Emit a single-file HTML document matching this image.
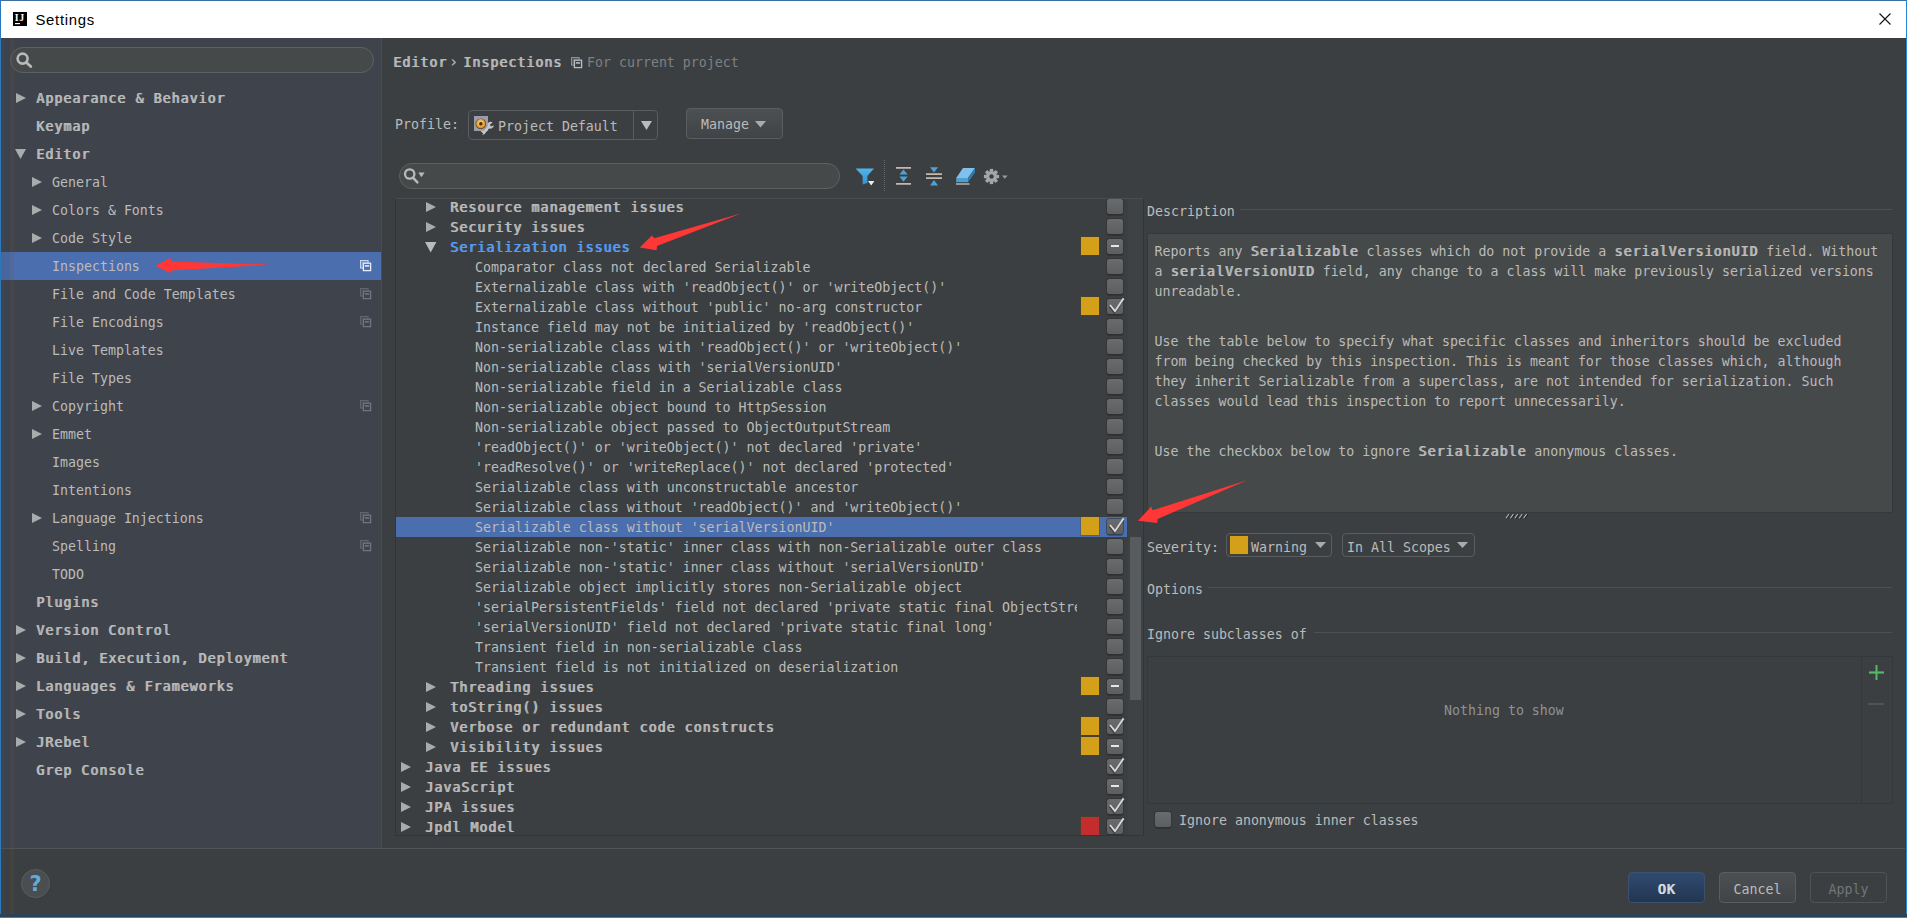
<!DOCTYPE html><html><head><meta charset="utf-8"><title>Settings</title><style>
*{box-sizing:border-box;margin:0;padding:0}
html,body{width:1907px;height:918px;overflow:hidden;background:#3c3f41}
body{position:relative;font-family:"DejaVu Sans Mono","Liberation Mono",monospace;font-size:13.28px;color:#bbbbbb;-webkit-font-smoothing:antialiased}
.abs{position:absolute}
.t{position:absolute;white-space:pre;line-height:20px;height:21px;padding-top:1px}
.b{font-weight:normal;letter-spacing:1.025px;text-shadow:1px 0 0 currentColor}
#titlebar{position:absolute;left:0;top:0;width:1907px;height:38px;background:#ffffff;border-top:1px solid #3b6f9f}
#title{position:absolute;left:35.4px;top:10px;font-family:"Liberation Sans",sans-serif;font-size:14.9px;color:#000;line-height:20px;letter-spacing:0.72px}
#bl{position:absolute;left:0;top:0;width:1px;height:918px;background:#2a78bd}
#br{position:absolute;left:1906px;top:0;width:1px;height:918px;background:#2b86d6}
#bb{position:absolute;left:0;top:914px;width:1907px;height:4px;background:linear-gradient(#33424e 0,#2a435a 33%,#23425f 74%,#4d7da9 76%)}
#side{position:absolute;left:1px;top:38px;width:380px;height:810px;background:#3e434c}
#sidediv{position:absolute;left:381px;top:38px;width:1px;height:810px;background:#4a4d50}
.lrow{position:absolute;left:1px;width:380px;height:28px;line-height:28px;white-space:pre}
.lrow.sel{background:#4b6eaf}
.lrow span{position:absolute;top:1px}
.search{position:absolute;border:1px solid #5e6162;background:#45494a;border-radius:14px}
.rrow{position:absolute;left:396px;width:731px;height:20px;line-height:20px;white-space:pre}
.rrow.sel{background:#4b6eaf}
.rrow span{position:absolute;top:1px}
.cb{position:absolute;width:16px;height:15px;border-radius:2.5px;background:linear-gradient(#6a6b6c,#5c5e60);box-shadow:0 0 0 1px rgba(43,45,47,.55),0 2px 0 rgba(30,32,34,.35)}
.sq{position:absolute;width:18px;height:18px;box-shadow:0 0 0 1px rgba(90,70,15,.3)}
.combo{position:absolute;border:1px solid #5a5d5f;border-radius:4px;background:#3c3f41}
.btn{position:absolute;border-radius:4px;border:1px solid #5a5d5f;background:linear-gradient(#4c5052,#404446);text-align:center;padding-top:2px}
.hl{position:absolute;height:1px;background:#4d5052}
svg{position:absolute;overflow:visible}
</style></head><body>
<div id="titlebar"></div>
<svg style="left:13px;top:12px" width="14" height="14" viewBox="0 0 14 14"><rect width="14" height="14" fill="#000"/><rect x="2" y="11" width="5" height="1.2" fill="#fff"/><text y="8.8" font-family="Liberation Serif,DejaVu Serif,serif" font-weight="bold" font-size="9.8" fill="#fff"><tspan x="1.7">I</tspan><tspan x="6.2">J</tspan></text></svg>
<div id="title">Settings</div>
<svg style="left:1879px;top:13px" width="12" height="12" viewBox="0 0 12 12"><path d="M0.5 0.5L11.5 11.5M11.5 0.5L0.5 11.5" stroke="#111" stroke-width="1.1" fill="none"/></svg>
<div id="side"></div><div id="sidediv"></div>
<div class="search" style="left:10px;top:47px;width:364px;height:26px"></div>
<svg style="left:16px;top:52px" width="16" height="16" viewBox="0 0 16 16"><circle cx="6.6" cy="6.6" r="5" fill="none" stroke="#b9b9b9" stroke-width="2.6"/><path d="M10.4 10.4L14.8 14.6" stroke="#b9b9b9" stroke-width="2.8" stroke-linecap="round"/></svg>
<div class="lrow" style="top:84px"><span class="b" style="left:35px">Appearance &amp; Behavior</span></div>
<svg style="left:16px;top:93px" width="10" height="10" viewBox="0 0 10 10" preserveAspectRatio="none"><path d="M0 0L10 5L0 10Z" fill="#a9abad"/></svg>
<div class="lrow" style="top:112px"><span class="b" style="left:35px">Keymap</span></div>
<div class="lrow" style="top:140px"><span class="b" style="left:35px">Editor</span></div>
<svg style="left:15px;top:149px" width="11" height="10" viewBox="0 0 11 10" preserveAspectRatio="none"><path d="M0 0L11 0L5.5 10Z" fill="#a9abad"/></svg>
<div class="lrow" style="top:168px"><span class="" style="left:51px">General</span></div>
<svg style="left:32px;top:177px" width="10" height="10" viewBox="0 0 10 10" preserveAspectRatio="none"><path d="M0 0L10 5L0 10Z" fill="#a9abad"/></svg>
<div class="lrow" style="top:196px"><span class="" style="left:51px">Colors &amp; Fonts</span></div>
<svg style="left:32px;top:205px" width="10" height="10" viewBox="0 0 10 10" preserveAspectRatio="none"><path d="M0 0L10 5L0 10Z" fill="#a9abad"/></svg>
<div class="lrow" style="top:224px"><span class="" style="left:51px">Code Style</span></div>
<svg style="left:32px;top:233px" width="10" height="10" viewBox="0 0 10 10" preserveAspectRatio="none"><path d="M0 0L10 5L0 10Z" fill="#a9abad"/></svg>
<div class="lrow sel" style="top:252px"><span class="" style="left:51px">Inspections</span></div>
<svg style="left:360px;top:260.4px" width="11" height="11" viewBox="0 0 11 11"><rect x="0.5" y="0.5" width="7.6" height="7.6" fill="#c8d4ec" fill-opacity=".35" stroke="#c8d4ec" stroke-width="1"/><rect x="3.4" y="3.2" width="7.2" height="7.4" fill="#4b6eaf" stroke="#e6ecf8" stroke-width="1.3"/><path d="M4.8 5.9H9.2" stroke="#e6ecf8" stroke-width="1.6"/></svg>
<div class="lrow" style="top:280px"><span class="" style="left:51px">File and Code Templates</span></div>
<svg style="left:360px;top:288.4px" width="11" height="11" viewBox="0 0 11 11"><rect x="0.5" y="0.5" width="7.6" height="7.6" fill="#5f656d" fill-opacity=".35" stroke="#5f656d" stroke-width="1"/><rect x="3.4" y="3.2" width="7.2" height="7.4" fill="#3e434c" stroke="#70767d" stroke-width="1.3"/><path d="M4.8 5.9H9.2" stroke="#70767d" stroke-width="1.6"/></svg>
<div class="lrow" style="top:308px"><span class="" style="left:51px">File Encodings</span></div>
<svg style="left:360px;top:316.4px" width="11" height="11" viewBox="0 0 11 11"><rect x="0.5" y="0.5" width="7.6" height="7.6" fill="#5f656d" fill-opacity=".35" stroke="#5f656d" stroke-width="1"/><rect x="3.4" y="3.2" width="7.2" height="7.4" fill="#3e434c" stroke="#70767d" stroke-width="1.3"/><path d="M4.8 5.9H9.2" stroke="#70767d" stroke-width="1.6"/></svg>
<div class="lrow" style="top:336px"><span class="" style="left:51px">Live Templates</span></div>
<div class="lrow" style="top:364px"><span class="" style="left:51px">File Types</span></div>
<div class="lrow" style="top:392px"><span class="" style="left:51px">Copyright</span></div>
<svg style="left:32px;top:401px" width="10" height="10" viewBox="0 0 10 10" preserveAspectRatio="none"><path d="M0 0L10 5L0 10Z" fill="#a9abad"/></svg>
<svg style="left:360px;top:400.4px" width="11" height="11" viewBox="0 0 11 11"><rect x="0.5" y="0.5" width="7.6" height="7.6" fill="#5f656d" fill-opacity=".35" stroke="#5f656d" stroke-width="1"/><rect x="3.4" y="3.2" width="7.2" height="7.4" fill="#3e434c" stroke="#70767d" stroke-width="1.3"/><path d="M4.8 5.9H9.2" stroke="#70767d" stroke-width="1.6"/></svg>
<div class="lrow" style="top:420px"><span class="" style="left:51px">Emmet</span></div>
<svg style="left:32px;top:429px" width="10" height="10" viewBox="0 0 10 10" preserveAspectRatio="none"><path d="M0 0L10 5L0 10Z" fill="#a9abad"/></svg>
<div class="lrow" style="top:448px"><span class="" style="left:51px">Images</span></div>
<div class="lrow" style="top:476px"><span class="" style="left:51px">Intentions</span></div>
<div class="lrow" style="top:504px"><span class="" style="left:51px">Language Injections</span></div>
<svg style="left:32px;top:513px" width="10" height="10" viewBox="0 0 10 10" preserveAspectRatio="none"><path d="M0 0L10 5L0 10Z" fill="#a9abad"/></svg>
<svg style="left:360px;top:512.4px" width="11" height="11" viewBox="0 0 11 11"><rect x="0.5" y="0.5" width="7.6" height="7.6" fill="#5f656d" fill-opacity=".35" stroke="#5f656d" stroke-width="1"/><rect x="3.4" y="3.2" width="7.2" height="7.4" fill="#3e434c" stroke="#70767d" stroke-width="1.3"/><path d="M4.8 5.9H9.2" stroke="#70767d" stroke-width="1.6"/></svg>
<div class="lrow" style="top:532px"><span class="" style="left:51px">Spelling</span></div>
<svg style="left:360px;top:540.4px" width="11" height="11" viewBox="0 0 11 11"><rect x="0.5" y="0.5" width="7.6" height="7.6" fill="#5f656d" fill-opacity=".35" stroke="#5f656d" stroke-width="1"/><rect x="3.4" y="3.2" width="7.2" height="7.4" fill="#3e434c" stroke="#70767d" stroke-width="1.3"/><path d="M4.8 5.9H9.2" stroke="#70767d" stroke-width="1.6"/></svg>
<div class="lrow" style="top:560px"><span class="" style="left:51px">TODO</span></div>
<div class="lrow" style="top:588px"><span class="b" style="left:35px">Plugins</span></div>
<div class="lrow" style="top:616px"><span class="b" style="left:35px">Version Control</span></div>
<svg style="left:16px;top:625px" width="10" height="10" viewBox="0 0 10 10" preserveAspectRatio="none"><path d="M0 0L10 5L0 10Z" fill="#a9abad"/></svg>
<div class="lrow" style="top:644px"><span class="b" style="left:35px">Build, Execution, Deployment</span></div>
<svg style="left:16px;top:653px" width="10" height="10" viewBox="0 0 10 10" preserveAspectRatio="none"><path d="M0 0L10 5L0 10Z" fill="#a9abad"/></svg>
<div class="lrow" style="top:672px"><span class="b" style="left:35px">Languages &amp; Frameworks</span></div>
<svg style="left:16px;top:681px" width="10" height="10" viewBox="0 0 10 10" preserveAspectRatio="none"><path d="M0 0L10 5L0 10Z" fill="#a9abad"/></svg>
<div class="lrow" style="top:700px"><span class="b" style="left:35px">Tools</span></div>
<svg style="left:16px;top:709px" width="10" height="10" viewBox="0 0 10 10" preserveAspectRatio="none"><path d="M0 0L10 5L0 10Z" fill="#a9abad"/></svg>
<div class="lrow" style="top:728px"><span class="b" style="left:35px">JRebel</span></div>
<svg style="left:16px;top:737px" width="10" height="10" viewBox="0 0 10 10" preserveAspectRatio="none"><path d="M0 0L10 5L0 10Z" fill="#a9abad"/></svg>
<div class="lrow" style="top:756px"><span class="b" style="left:35px">Grep Console</span></div>
<div class="hl" style="left:1px;top:848px;width:1904px;background:#515355"></div>
<div class="abs" style="left:21px;top:869px;width:29px;height:29px;border-radius:15px;border:1px solid #5a5d5f;background:#4a4e50;text-align:center;line-height:29px;font-family:'DejaVu Sans',sans-serif;font-weight:bold;font-size:21px;color:#62aadb">?</div>
<div class="btn" style="left:1628px;top:872px;width:77px;height:31px;line-height:29px;background:linear-gradient(#304b70,#233552);border-color:#3d516e;color:#e0e0e0"><span class="b" style="color:#dcdcdc">OK</span></div>
<div class="btn" style="left:1719px;top:872px;width:77px;height:31px;line-height:29px">Cancel</div>
<div class="btn" style="left:1810px;top:872px;width:77px;height:31px;line-height:29px;background:#3c3f41;color:#737678;border-color:#505355">Apply</div>
<div class="t b" style="left:393px;top:52px">Editor</div>
<div class="t" style="left:450.5px;top:51px;font-family:'DejaVu Sans',sans-serif;font-size:16px">›</div>
<div class="t b" style="left:463px;top:52px">Inspections</div>
<svg style="left:571px;top:56.5px" width="11" height="11" viewBox="0 0 11 11"><rect x="0.5" y="0.5" width="7.6" height="7.6" fill="#8a9198" fill-opacity=".35" stroke="#8a9198" stroke-width="1"/><rect x="3.4" y="3.2" width="7.2" height="7.4" fill="#3c3f41" stroke="#b8bcc0" stroke-width="1.3"/><path d="M4.8 5.9H9.2" stroke="#b8bcc0" stroke-width="1.6"/></svg>
<div class="t" style="left:587px;top:52px;color:#7d8184">For current project</div>
<div class="t" style="left:395px;top:114px">Profile:</div>
<div class="combo" style="left:468px;top:110px;width:190px;height:30px"><div class="abs" style="left:164px;top:0;width:1px;height:28px;background:#5a5d5f"></div></div>
<svg style="left:474px;top:116px" width="22" height="20" viewBox="0 0 22 20"><defs><radialGradient id="og" cx="0.45" cy="0.4" r="0.6"><stop offset="0" stop-color="#f7d873"/><stop offset="1" stop-color="#d98a26"/></radialGradient></defs><rect x="0" y="0" width="14" height="15" fill="#9a9bab"/><circle cx="6.8" cy="7.7" r="5.3" fill="#6b3f12"/><circle cx="6.8" cy="7.7" r="4.6" fill="url(#og)"/><circle cx="6.8" cy="7.7" r="1.7" fill="#4a2a08"/><path d="M9.6 17.2L15.2 10.2" stroke="#c6c6c6" stroke-width="2.6" stroke-linecap="butt"/><path d="M13.4 8.2A3.4 3.4 0 0 1 18.6 6.4L15.8 8.8L17 10.6L19.8 9.2A3.4 3.4 0 0 1 14.4 12Z" fill="#c6c6c6"/><path d="M6.6 15.6A2.8 2.8 0 0 1 11.2 16.4L10 18.6A2.8 2.8 0 0 0 8.2 19.6L9.2 17.4L8 16.2Z" fill="#c6c6c6"/></svg>
<div class="t" style="left:498px;top:116px">Project Default</div>
<svg style="left:640.5px;top:121px" width="11" height="9" viewBox="0 0 11 10" preserveAspectRatio="none"><path d="M0 0L11 0L5.5 10Z" fill="#bbbbbb"/></svg>
<div class="btn" style="left:686px;top:108px;width:97px;height:31px"></div>
<div class="t" style="left:701px;top:114px">Manage</div>
<svg style="left:755px;top:120.5px" width="11" height="6.5" viewBox="0 0 11 10" preserveAspectRatio="none"><path d="M0 0L11 0L5.5 10Z" fill="#a9abad"/></svg>
<div class="search" style="left:399px;top:163px;width:441px;height:26px"></div>
<svg style="left:403px;top:167px" width="24" height="18" viewBox="0 0 24 18"><circle cx="6.7" cy="7" r="4.7" fill="none" stroke="#b9b9b9" stroke-width="2.3"/><path d="M10 10.6L14.4 15.4" stroke="#b9b9b9" stroke-width="2.5" stroke-linecap="round"/><path d="M15.3 5.6H21.6L18.4 10.2Z" fill="#b9b9b9"/></svg>
<svg style="left:855px;top:166px" width="22" height="22" viewBox="0 0 22 22"><defs><linearGradient id="fg" x1="0" y1="0" x2="0" y2="1"><stop offset="0" stop-color="#52b4ea"/><stop offset="1" stop-color="#2f93cf"/></linearGradient></defs><path d="M0.6 2.6H19L12.4 10V17L7.6 18.4V10Z" fill="url(#fg)"/><path d="M13 15H19.4L16.2 19.4Z" fill="#ececec"/></svg>
<div class="abs" style="left:884px;top:160px;width:0;height:31px;border-left:1px dotted #66696b"></div>
<svg style="left:896px;top:166px" width="15" height="20" viewBox="0 0 15 20"><path d="M0 1.9H15M0 17.9H15" stroke="#c4b8ad" stroke-width="1.7"/><path d="M7.5 3.6L11.6 8.6H3.4Z" fill="#4aa3db"/><path d="M7.5 15.8L11.6 10.6H3.4Z" fill="#4aa3db"/></svg>
<svg style="left:926px;top:166px" width="16" height="20" viewBox="0 0 16 20"><path d="M0 8.2H16M0 12.2H16" stroke="#c4b8ad" stroke-width="1.7"/><path d="M8 6.4L12 1.2H4Z" fill="#4aa3db"/><path d="M8 14L12 19.4H4Z" fill="#4aa3db"/></svg>
<svg style="left:955px;top:167px" width="21" height="19" viewBox="0 0 21 19"><path d="M8 1H20L13 11H1.2Z" fill="#7fc1ea"/><path d="M1.2 11H13V15.2H1.2Z" fill="#4d9fd2"/><path d="M13 11L20 1V5.4L13 15.2Z" fill="#2e7cb0"/><path d="M1 17H14.5" stroke="#cfcfcf" stroke-width="1.2"/></svg>
<svg style="left:984px;top:168.5px" width="26" height="16" viewBox="0 0 26 16"><g transform="translate(7.5,7.5)"><rect x="-1.7" y="-7.6" width="3.4" height="4" fill="#a4a6a8" transform="rotate(0)"/><rect x="-1.7" y="-7.6" width="3.4" height="4" fill="#a4a6a8" transform="rotate(45)"/><rect x="-1.7" y="-7.6" width="3.4" height="4" fill="#a4a6a8" transform="rotate(90)"/><rect x="-1.7" y="-7.6" width="3.4" height="4" fill="#a4a6a8" transform="rotate(135)"/><rect x="-1.7" y="-7.6" width="3.4" height="4" fill="#a4a6a8" transform="rotate(180)"/><rect x="-1.7" y="-7.6" width="3.4" height="4" fill="#a4a6a8" transform="rotate(225)"/><rect x="-1.7" y="-7.6" width="3.4" height="4" fill="#a4a6a8" transform="rotate(270)"/><rect x="-1.7" y="-7.6" width="3.4" height="4" fill="#a4a6a8" transform="rotate(315)"/><circle r="5.4" fill="#a4a6a8"/><circle r="2.2" fill="#3c3f41"/></g><path d="M18 6.4H23.6L20.8 9.8Z" fill="#9a9c9e"/></svg>
<div class="abs" style="left:395px;top:198px;width:749px;height:638px;border:1px solid #323537;border-top-color:#4a4d4f"></div>
<div class="abs" style="left:1128px;top:199px;width:15px;height:636px;background:#3f4244"></div>
<div class="abs" style="left:1130px;top:537px;width:11px;height:163px;background:#595c5e"></div>
<div class="abs" style="left:396px;top:199px;width:747px;height:636px;overflow:hidden">
<div class="rrow" style="left:0;top:-2px"><span class="b" style="left:54px">Resource management issues</span></div>
<svg style="left:30px;top:3px" width="10" height="10" viewBox="0 0 10 10" preserveAspectRatio="none"><path d="M0 0L10 5L0 10Z" fill="#a9abad"/></svg>
<div class="cb" style="left:711px;top:0px"></div>
<div class="rrow" style="left:0;top:18px"><span class="b" style="left:54px">Security issues</span></div>
<svg style="left:30px;top:23px" width="10" height="10" viewBox="0 0 10 10" preserveAspectRatio="none"><path d="M0 0L10 5L0 10Z" fill="#a9abad"/></svg>
<div class="cb" style="left:711px;top:20px"></div>
<div class="rrow" style="left:0;top:38px"><span class="b" style="left:54px;color:#589df6">Serialization issues</span></div>
<svg style="left:29px;top:43px" width="11.4" height="10.6" viewBox="0 0 11 10" preserveAspectRatio="none"><path d="M0 0L11 0L5.5 10Z" fill="#b9bbbd"/></svg>
<div class="sq" style="left:685px;top:38px;background:#d4a01a"></div>
<div class="cb" style="left:711px;top:40px"></div>
<div class="abs" style="left:715px;top:46px;width:8px;height:2px;background:#e6e6e6"></div>
<div class="rrow" style="left:0;top:58px"><span class="" style="left:79px;width:602px;overflow:hidden;height:20px">Comparator class not declared Serializable</span></div>
<div class="cb" style="left:711px;top:60px"></div>
<div class="rrow" style="left:0;top:78px"><span class="" style="left:79px;width:602px;overflow:hidden;height:20px">Externalizable class with &#x27;readObject()&#x27; or &#x27;writeObject()&#x27;</span></div>
<div class="cb" style="left:711px;top:80px"></div>
<div class="rrow" style="left:0;top:98px"><span class="" style="left:79px;width:602px;overflow:hidden;height:20px">Externalizable class without &#x27;public&#x27; no-arg constructor</span></div>
<div class="sq" style="left:685px;top:98px;background:#d4a01a"></div>
<div class="cb" style="left:711px;top:100px"></div>
<svg style="left:711px;top:100px" width="18" height="16" viewBox="0 0 18 16"><path d="M2.6 7.4L7.6 13.6L16.6 0.4" fill="none" stroke="#2b2b2b" stroke-opacity=".75" stroke-width="2"/><path d="M3 6L8 12.2L16.6 -0.6" fill="none" stroke="#d6d6d6" stroke-width="1.9"/></svg>
<div class="rrow" style="left:0;top:118px"><span class="" style="left:79px;width:602px;overflow:hidden;height:20px">Instance field may not be initialized by &#x27;readObject()&#x27;</span></div>
<div class="cb" style="left:711px;top:120px"></div>
<div class="rrow" style="left:0;top:138px"><span class="" style="left:79px;width:602px;overflow:hidden;height:20px">Non-serializable class with &#x27;readObject()&#x27; or &#x27;writeObject()&#x27;</span></div>
<div class="cb" style="left:711px;top:140px"></div>
<div class="rrow" style="left:0;top:158px"><span class="" style="left:79px;width:602px;overflow:hidden;height:20px">Non-serializable class with &#x27;serialVersionUID&#x27;</span></div>
<div class="cb" style="left:711px;top:160px"></div>
<div class="rrow" style="left:0;top:178px"><span class="" style="left:79px;width:602px;overflow:hidden;height:20px">Non-serializable field in a Serializable class</span></div>
<div class="cb" style="left:711px;top:180px"></div>
<div class="rrow" style="left:0;top:198px"><span class="" style="left:79px;width:602px;overflow:hidden;height:20px">Non-serializable object bound to HttpSession</span></div>
<div class="cb" style="left:711px;top:200px"></div>
<div class="rrow" style="left:0;top:218px"><span class="" style="left:79px;width:602px;overflow:hidden;height:20px">Non-serializable object passed to ObjectOutputStream</span></div>
<div class="cb" style="left:711px;top:220px"></div>
<div class="rrow" style="left:0;top:238px"><span class="" style="left:79px;width:602px;overflow:hidden;height:20px">&#x27;readObject()&#x27; or &#x27;writeObject()&#x27; not declared &#x27;private&#x27;</span></div>
<div class="cb" style="left:711px;top:240px"></div>
<div class="rrow" style="left:0;top:258px"><span class="" style="left:79px;width:602px;overflow:hidden;height:20px">&#x27;readResolve()&#x27; or &#x27;writeReplace()&#x27; not declared &#x27;protected&#x27;</span></div>
<div class="cb" style="left:711px;top:260px"></div>
<div class="rrow" style="left:0;top:278px"><span class="" style="left:79px;width:602px;overflow:hidden;height:20px">Serializable class with unconstructable ancestor</span></div>
<div class="cb" style="left:711px;top:280px"></div>
<div class="rrow" style="left:0;top:298px"><span class="" style="left:79px;width:602px;overflow:hidden;height:20px">Serializable class without &#x27;readObject()&#x27; and &#x27;writeObject()&#x27;</span></div>
<div class="cb" style="left:711px;top:300px"></div>
<div class="rrow sel" style="left:0;top:318px"><span class="" style="left:79px;width:602px;overflow:hidden;height:20px">Serializable class without &#x27;serialVersionUID&#x27;</span></div>
<div class="sq" style="left:685px;top:318px;background:#d4a01a"></div>
<div class="cb" style="left:711px;top:320px"></div>
<svg style="left:711px;top:320px" width="18" height="16" viewBox="0 0 18 16"><path d="M2.6 7.4L7.6 13.6L16.6 0.4" fill="none" stroke="#2b2b2b" stroke-opacity=".75" stroke-width="2"/><path d="M3 6L8 12.2L16.6 -0.6" fill="none" stroke="#d6d6d6" stroke-width="1.9"/></svg>
<div class="rrow" style="left:0;top:338px"><span class="" style="left:79px;width:602px;overflow:hidden;height:20px">Serializable non-&#x27;static&#x27; inner class with non-Serializable outer class</span></div>
<div class="cb" style="left:711px;top:340px"></div>
<div class="rrow" style="left:0;top:358px"><span class="" style="left:79px;width:602px;overflow:hidden;height:20px">Serializable non-&#x27;static&#x27; inner class without &#x27;serialVersionUID&#x27;</span></div>
<div class="cb" style="left:711px;top:360px"></div>
<div class="rrow" style="left:0;top:378px"><span class="" style="left:79px;width:602px;overflow:hidden;height:20px">Serializable object implicitly stores non-Serializable object</span></div>
<div class="cb" style="left:711px;top:380px"></div>
<div class="rrow" style="left:0;top:398px"><span class="" style="left:79px;width:602px;overflow:hidden;height:20px">&#x27;serialPersistentFields&#x27; field not declared &#x27;private static final ObjectStreamField[]&#x27;</span></div>
<div class="cb" style="left:711px;top:400px"></div>
<div class="rrow" style="left:0;top:418px"><span class="" style="left:79px;width:602px;overflow:hidden;height:20px">&#x27;serialVersionUID&#x27; field not declared &#x27;private static final long&#x27;</span></div>
<div class="cb" style="left:711px;top:420px"></div>
<div class="rrow" style="left:0;top:438px"><span class="" style="left:79px;width:602px;overflow:hidden;height:20px">Transient field in non-serializable class</span></div>
<div class="cb" style="left:711px;top:440px"></div>
<div class="rrow" style="left:0;top:458px"><span class="" style="left:79px;width:602px;overflow:hidden;height:20px">Transient field is not initialized on deserialization</span></div>
<div class="cb" style="left:711px;top:460px"></div>
<div class="rrow" style="left:0;top:478px"><span class="b" style="left:54px">Threading issues</span></div>
<svg style="left:30px;top:483px" width="10" height="10" viewBox="0 0 10 10" preserveAspectRatio="none"><path d="M0 0L10 5L0 10Z" fill="#a9abad"/></svg>
<div class="sq" style="left:685px;top:478px;background:#d4a01a"></div>
<div class="cb" style="left:711px;top:480px"></div>
<div class="abs" style="left:715px;top:486px;width:8px;height:2px;background:#e6e6e6"></div>
<div class="rrow" style="left:0;top:498px"><span class="b" style="left:54px">toString() issues</span></div>
<svg style="left:30px;top:503px" width="10" height="10" viewBox="0 0 10 10" preserveAspectRatio="none"><path d="M0 0L10 5L0 10Z" fill="#a9abad"/></svg>
<div class="cb" style="left:711px;top:500px"></div>
<div class="rrow" style="left:0;top:518px"><span class="b" style="left:54px">Verbose or redundant code constructs</span></div>
<svg style="left:30px;top:523px" width="10" height="10" viewBox="0 0 10 10" preserveAspectRatio="none"><path d="M0 0L10 5L0 10Z" fill="#a9abad"/></svg>
<div class="sq" style="left:685px;top:518px;background:#d4a01a"></div>
<div class="cb" style="left:711px;top:520px"></div>
<svg style="left:711px;top:520px" width="18" height="16" viewBox="0 0 18 16"><path d="M2.6 7.4L7.6 13.6L16.6 0.4" fill="none" stroke="#2b2b2b" stroke-opacity=".75" stroke-width="2"/><path d="M3 6L8 12.2L16.6 -0.6" fill="none" stroke="#d6d6d6" stroke-width="1.9"/></svg>
<div class="rrow" style="left:0;top:538px"><span class="b" style="left:54px">Visibility issues</span></div>
<svg style="left:30px;top:543px" width="10" height="10" viewBox="0 0 10 10" preserveAspectRatio="none"><path d="M0 0L10 5L0 10Z" fill="#a9abad"/></svg>
<div class="sq" style="left:685px;top:538px;background:#d4a01a"></div>
<div class="cb" style="left:711px;top:540px"></div>
<div class="abs" style="left:715px;top:546px;width:8px;height:2px;background:#e6e6e6"></div>
<div class="rrow" style="left:0;top:558px"><span class="b" style="left:29px">Java EE issues</span></div>
<svg style="left:5px;top:563px" width="10" height="10" viewBox="0 0 10 10" preserveAspectRatio="none"><path d="M0 0L10 5L0 10Z" fill="#a9abad"/></svg>
<div class="cb" style="left:711px;top:560px"></div>
<svg style="left:711px;top:560px" width="18" height="16" viewBox="0 0 18 16"><path d="M2.6 7.4L7.6 13.6L16.6 0.4" fill="none" stroke="#2b2b2b" stroke-opacity=".75" stroke-width="2"/><path d="M3 6L8 12.2L16.6 -0.6" fill="none" stroke="#d6d6d6" stroke-width="1.9"/></svg>
<div class="rrow" style="left:0;top:578px"><span class="b" style="left:29px">JavaScript</span></div>
<svg style="left:5px;top:583px" width="10" height="10" viewBox="0 0 10 10" preserveAspectRatio="none"><path d="M0 0L10 5L0 10Z" fill="#a9abad"/></svg>
<div class="cb" style="left:711px;top:580px"></div>
<div class="abs" style="left:715px;top:586px;width:8px;height:2px;background:#e6e6e6"></div>
<div class="rrow" style="left:0;top:598px"><span class="b" style="left:29px">JPA issues</span></div>
<svg style="left:5px;top:603px" width="10" height="10" viewBox="0 0 10 10" preserveAspectRatio="none"><path d="M0 0L10 5L0 10Z" fill="#a9abad"/></svg>
<div class="cb" style="left:711px;top:600px"></div>
<svg style="left:711px;top:600px" width="18" height="16" viewBox="0 0 18 16"><path d="M2.6 7.4L7.6 13.6L16.6 0.4" fill="none" stroke="#2b2b2b" stroke-opacity=".75" stroke-width="2"/><path d="M3 6L8 12.2L16.6 -0.6" fill="none" stroke="#d6d6d6" stroke-width="1.9"/></svg>
<div class="rrow" style="left:0;top:618px"><span class="b" style="left:29px">Jpdl Model</span></div>
<svg style="left:5px;top:623px" width="10" height="10" viewBox="0 0 10 10" preserveAspectRatio="none"><path d="M0 0L10 5L0 10Z" fill="#a9abad"/></svg>
<div class="sq" style="left:685px;top:618px;background:#c42d2d"></div>
<div class="cb" style="left:711px;top:620px"></div>
<svg style="left:711px;top:620px" width="18" height="16" viewBox="0 0 18 16"><path d="M2.6 7.4L7.6 13.6L16.6 0.4" fill="none" stroke="#2b2b2b" stroke-opacity=".75" stroke-width="2"/><path d="M3 6L8 12.2L16.6 -0.6" fill="none" stroke="#d6d6d6" stroke-width="1.9"/></svg>
</div>
<div class="t" style="left:1147px;top:201px">Description</div>
<div class="hl" style="left:1240px;top:209px;width:652px"></div>
<div class="abs" style="left:1147px;top:233px;width:746px;height:280px;background:#45494a;border:1px solid #36393b"></div>
<div class="t" style="left:1154.6px;top:241px">Reports any <b class="b">Serializable</b> classes which do not provide a <b class="b">serialVersionUID</b> field. Without</div>
<div class="t" style="left:1154.6px;top:261px">a <b class="b">serialVersionUID</b> field, any change to a class will make previously serialized versions</div>
<div class="t" style="left:1154.6px;top:281px">unreadable.</div>
<div class="t" style="left:1154.6px;top:331px">Use the table below to specify what specific classes and inheritors should be excluded</div>
<div class="t" style="left:1154.6px;top:351px">from being checked by this inspection. This is meant for those classes which, although</div>
<div class="t" style="left:1154.6px;top:371px">they inherit Serializable from a superclass, are not intended for serialization. Such</div>
<div class="t" style="left:1154.6px;top:391px">classes would lead this inspection to report unnecessarily.</div>
<div class="t" style="left:1154.6px;top:441px">Use the checkbox below to ignore <b class="b">Serializable</b> anonymous classes.</div>
<svg style="left:1505px;top:513px" width="24" height="7" viewBox="0 0 24 7"><path d="M2 5.6L5 1.4" stroke="#25282a" stroke-width="1.5"/><path d="M1 5.2L4 1" stroke="#b9bbbd" stroke-width="1.1"/><path d="M6.4 5.6L9.4 1.4" stroke="#25282a" stroke-width="1.5"/><path d="M5.4 5.2L8.4 1" stroke="#b9bbbd" stroke-width="1.1"/><path d="M10.8 5.6L13.8 1.4" stroke="#25282a" stroke-width="1.5"/><path d="M9.8 5.2L12.8 1" stroke="#b9bbbd" stroke-width="1.1"/><path d="M15.2 5.6L18.2 1.4" stroke="#25282a" stroke-width="1.5"/><path d="M14.2 5.2L17.2 1" stroke="#b9bbbd" stroke-width="1.1"/><path d="M19.6 5.6L22.6 1.4" stroke="#25282a" stroke-width="1.5"/><path d="M18.6 5.2L21.6 1" stroke="#b9bbbd" stroke-width="1.1"/></svg>
<div class="t" style="left:1147px;top:537px">Se<u>v</u>erity:</div>
<div class="combo" style="left:1226px;top:533px;width:106px;height:24px"></div>
<div class="sq" style="left:1230px;top:536px;background:#d4a01a"></div>
<div class="t" style="left:1251px;top:537px">Warning</div>
<svg style="left:1314.5px;top:542px" width="11" height="6" viewBox="0 0 11 10" preserveAspectRatio="none"><path d="M0 0L11 0L5.5 10Z" fill="#a9abad"/></svg>
<div class="combo" style="left:1342px;top:533px;width:133px;height:24px"></div>
<div class="t" style="left:1347px;top:537px">In All Scopes</div>
<svg style="left:1457px;top:542px" width="11" height="6" viewBox="0 0 11 10" preserveAspectRatio="none"><path d="M0 0L11 0L5.5 10Z" fill="#a9abad"/></svg>
<div class="t" style="left:1147px;top:579px">Options</div>
<div class="hl" style="left:1208px;top:587px;width:684px"></div>
<div class="t" style="left:1147px;top:624px">Ignore subclasses of</div>
<div class="hl" style="left:1314px;top:632px;width:578px"></div>
<div class="abs" style="left:1147px;top:656px;width:746px;height:148px;border:1px solid #35383a"><div class="abs" style="left:713px;top:0;width:1px;height:146px;background:#35383a"></div></div>
<div class="t" style="left:1444px;top:700px;color:#8f9294">Nothing to show</div>
<svg style="left:1868.5px;top:664.5px" width="15" height="15" viewBox="0 0 15 15"><path d="M7.5 0V15M0 7.5H15" stroke="#1f7a2c" stroke-width="3.2" opacity=".6"/><path d="M7.5 0V15M0 7.5H15" stroke="#58b868" stroke-width="1.8"/></svg>
<div class="abs" style="left:1868px;top:702.5px;width:16px;height:2px;background:#505355"></div>
<div class="cb" style="left:1155px;top:812px"></div>
<div class="t" style="left:1179px;top:810px">Ignore anonymous inner classes</div>
<svg style="left:0;top:0" width="1907" height="918" viewBox="0 0 1907 918"><path d="M155.3 265.8L170.3 258L171.8 261.6L270 264.6L171.8 270.4L170.3 273Z" fill="#ff3737"/><path d="M639.7 247.6L651.9 235.5L654.3 238.2L741.6 213.3L657 246L656.6 250.2Z" fill="#ff3737"/><path d="M1138 520.7L1151.2 506.6L1152.6 510.3L1247.7 480L1157.6 519L1157.2 523Z" fill="#ff3737"/></svg>
<div class="abs" style="left:1px;top:38px;width:13px;height:876px;background:linear-gradient(90deg,rgba(72,72,70,.22) 0,rgba(72,72,70,.22) 28%,rgba(40,66,110,.16) 30%,rgba(40,66,110,.16) 68%,rgba(110,80,50,.18) 70%,rgba(110,80,50,.18) 100%)"></div>
<div class="abs" style="left:1905px;top:38px;width:1px;height:876px;background:#363b41"></div>
<div id="bl"></div><div id="br"></div><div id="bb"></div>
</body></html>
